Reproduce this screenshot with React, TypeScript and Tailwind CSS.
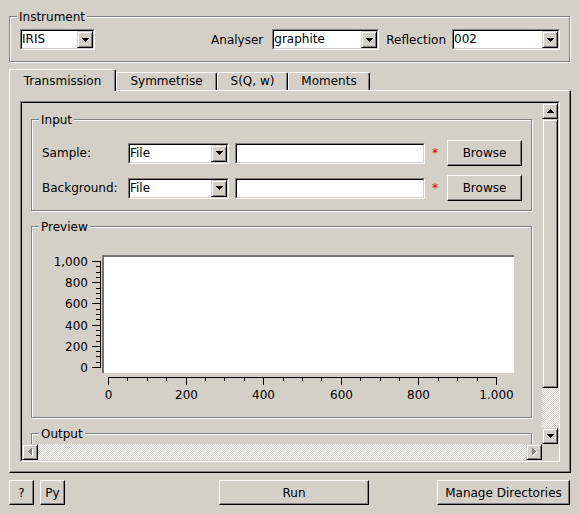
import React from "react";

const raised =
  "border border-t-white border-l-white border-r-black border-b-black shadow-[inset_-1px_-1px_0_#808080]";
const raisedSb =
  "border border-t-[#d4d0c8] border-l-[#d4d0c8] border-r-black border-b-black shadow-[inset_1px_1px_0_#fff,inset_-1px_-1px_0_#808080]";
const checker =
  "bg-[conic-gradient(#fff_25%,#d4d0c8_0_50%,#fff_0_75%,#d4d0c8_0)] bg-[length:2px_2px]";

type Dir = "up" | "down" | "left" | "right";

function Arrow({ dir, disabled = false }: { dir: Dir; disabled?: boolean }) {
  const rects = (fill: string, off: number) =>
    [0, 1, 2, 3].map((i) => {
      const k = fill + dir + i;
      if (dir === "down")
        return <rect key={k} x={i + off} y={i + off} width={7 - 2 * i} height={1} fill={fill} />;
      if (dir === "up")
        return <rect key={k} x={i + off} y={3 - i + off} width={7 - 2 * i} height={1} fill={fill} />;
      if (dir === "right")
        return <rect key={k} x={i + off} y={i + off} width={1} height={7 - 2 * i} fill={fill} />;
      return <rect key={k} x={3 - i + off} y={i + off} width={1} height={7 - 2 * i} fill={fill} />;
    });
  const horiz = dir === "up" || dir === "down";
  const w = (horiz ? 7 : 4) + (disabled ? 1 : 0);
  const h = (horiz ? 4 : 7) + (disabled ? 1 : 0);
  return (
    <svg width={w} height={h} shapeRendering="crispEdges" className="block">
      {disabled && rects("#ffffff", 1)}
      {rects(disabled ? "#808080" : "#000000", 0)}
    </svg>
  );
}

function Combo({ value, className = "" }: { value: string; className?: string }) {
  return (
    <div
      className={`h-[21px] shrink-0 border border-t-[#808080] border-l-[#808080] border-r-white border-b-white ${className}`}
    >
      <div className="flex h-full border border-t-black border-l-black border-r-[#d4d0c8] border-b-[#d4d0c8] bg-white">
        <span className="flex-1 leading-[17px] whitespace-nowrap overflow-hidden">{value}</span>
        <div className={`w-[16px] h-full flex items-center justify-center bg-[#d4d0c8] ${raisedSb}`}>
          <Arrow dir="down" />
        </div>
      </div>
    </div>
  );
}

function TextField({ className = "" }: { className?: string }) {
  return (
    <div
      className={`h-[21px] shrink-0 border border-t-[#808080] border-l-[#808080] border-r-white border-b-white ${className}`}
    >
      <div className="h-full border border-t-black border-l-black border-r-[#d4d0c8] border-b-[#d4d0c8] bg-white" />
    </div>
  );
}

function Btn({ children, className = "" }: { children: React.ReactNode; className?: string }) {
  return (
    <div className={`flex items-center justify-center bg-[#d4d0c8] shrink-0 whitespace-nowrap ${raised} ${className}`}>
      {children}
    </div>
  );
}

function GroupBox({
  label,
  labelClass = "left-[7px]",
  className = "",
  children,
}: {
  label: string;
  labelClass?: string;
  className?: string;
  children?: React.ReactNode;
}) {
  return (
    <div
      className={`relative border border-[#808080] shadow-[1px_1px_0_#fff,inset_1px_1px_0_#fff] ${className}`}
    >
      <span className={`absolute top-[-7px] ${labelClass} px-[2px] bg-[#d4d0c8] leading-[14px] whitespace-nowrap`}>
        {label}
      </span>
      {children}
    </div>
  );
}

function InputRow({ label }: { label: string }) {
  return (
    <div className="flex items-center h-[26px]">
      <span className="w-[86px] shrink-0 whitespace-nowrap">{label}</span>
      <Combo value="File" className="w-[101px]" />
      <TextField className="w-[190px] ml-[6px]" />
      <span className="ml-[7px] w-[6px] text-[#d40000] leading-[14px]">*</span>
      <Btn className="ml-[9px] w-[75px] h-[26px]">Browse</Btn>
    </div>
  );
}

function Plot() {
  const yt = (v: number) => Math.round(140 - v * 0.106);
  const xt = (v: number) => Math.round(76 + v * 0.388);
  const steps: number[] = [];
  for (let v = 0; v <= 1000; v += 50) steps.push(v);
  const yLabels: Record<number, string> = { 0: "0", 200: "200", 400: "400", 600: "600", 800: "800", 1000: "1,000" };
  const xLabels: Record<number, string> = { 0: "0", 200: "200", 400: "400", 600: "600", 800: "800", 1000: "1.000" };
  return (
    <svg width={499} height={190} shapeRendering="crispEdges" className="block">
      <rect x={70} y={28} width={412} height={118} fill="#ffffff" />
      <rect x={70} y={28} width={412} height={2} fill="#737373" />
      <rect x={70} y={28} width={2} height={118} fill="#737373" />
      <rect x={68} y={34} width={1} height={107} fill="#000" />
      {steps.map((v) => {
        const major = v % 200 === 0;
        return (
          <rect key={"yt" + v} x={major ? 60 : 64} y={yt(v)} width={major ? 8 : 4} height={1} fill="#000" />
        );
      })}
      {Object.keys(yLabels).map((k) => {
        const v = Number(k);
        return (
          <text
            key={"yl" + v}
            x={56}
            y={yt(v) + 4.6}
            textAnchor="end"
            fontFamily="DejaVu Sans, sans-serif"
            fontSize={12}
            fill="#000"
            shapeRendering="auto"
          >
            {yLabels[v]}
          </text>
        );
      })}
      <rect x={76} y={150} width={389} height={1} fill="#000" />
      {steps.map((v) => {
        const major = v % 200 === 0;
        return <rect key={"xt" + v} x={xt(v)} y={150} width={1} height={major ? 8 : 4} fill="#000" />;
      })}
      {Object.keys(xLabels).map((k) => {
        const v = Number(k);
        return (
          <text
            key={"xl" + v}
            x={xt(v) + 0.5}
            y={172}
            textAnchor="middle"
            fontFamily="DejaVu Sans, sans-serif"
            fontSize={12}
            fill="#000"
          >
            {xLabels[v]}
          </text>
        );
      })}
    </svg>
  );
}

function VScroll() {
  return (
    <div className="flex flex-col">
      <div className={`h-[16px] shrink-0 flex items-center justify-center bg-[#d4d0c8] ${raisedSb}`}>
        <Arrow dir="up" />
      </div>
      <div className={`h-[269px] shrink-0 bg-[#d4d0c8] ${raisedSb}`} />
      <div className={`flex-1 ${checker}`} />
      <div className={`h-[16px] shrink-0 flex items-center justify-center bg-[#d4d0c8] ${raisedSb}`}>
        <Arrow dir="down" />
      </div>
    </div>
  );
}

function HScroll() {
  return (
    <div className="flex">
      <div className={`w-[16px] shrink-0 flex items-center justify-center bg-[#d4d0c8] ${raisedSb}`}>
        <Arrow dir="left" disabled />
      </div>
      <div className={`flex-1 ${checker}`} />
      <div className={`w-[16px] shrink-0 flex items-center justify-center bg-[#d4d0c8] ${raisedSb}`}>
        <Arrow dir="right" disabled />
      </div>
    </div>
  );
}

function Tab({ children, className = "" }: { children: React.ReactNode; className?: string }) {
  return (
    <div
      className={`h-[18px] shrink-0 flex items-end justify-center pb-[2px] border-t border-l border-r border-t-white border-l-white border-r-black shadow-[inset_-1px_0_0_#808080] rounded-t-[2px] whitespace-nowrap ${className}`}
    >
      {children}
    </div>
  );
}

export default function App() {
  return (
    <div className="w-[580px] h-[514px] overflow-hidden bg-[#d4d0c8] text-black text-[12px] leading-[14px] font-['DejaVu_Sans',sans-serif] pt-[16px] px-[9px]">
      <GroupBox
        label="Instrument"
        labelClass="left-[7px]"
        className="w-[561px] pt-[12px] pb-[11px] pl-[10px] pr-[9px] flex items-center justify-between"
      >
        <Combo value="IRIS" className="w-[75px]" />
        <div className="flex items-center">
          <span className="whitespace-nowrap">Analyser</span>
          <Combo value="graphite" className="w-[107px] ml-[9px]" />
          <span className="ml-[7px] whitespace-nowrap">Reflection</span>
          <Combo value="002" className="w-[108px] ml-[6px]" />
        </div>
      </GroupBox>

      <div className="mt-[7px] flex items-end h-[21px]">
        <div className="relative z-10 h-[22px] mb-[-1px] w-[107px] shrink-0 bg-[#d4d0c8] flex items-end justify-center pb-[3px] border-t border-l border-r border-t-white border-l-white border-r-black shadow-[inset_-1px_0_0_#808080] rounded-t-[2px]">
          Transmission
        </div>
        <Tab className="w-[101px] ml-0">Symmetrise</Tab>
        <Tab className="w-[71px]">S(Q, w)</Tab>
        <Tab className="w-[82px]">Moments</Tab>
      </div>

      <div className="h-[383px] p-[10px] border border-t-white border-l-white border-r-black border-b-black shadow-[inset_-1px_-1px_0_#808080]">
        <div className="h-[361px] border border-t-[#808080] border-l-[#808080] border-r-white border-b-white">
          <div className="h-full border border-t-black border-l-black border-r-[#d4d0c8] border-b-[#d4d0c8] grid grid-cols-[520px_16px] grid-rows-[341px_16px]">
            <div className="overflow-hidden">
              <div className="pt-[16px] pl-[9px] pr-[10px]">
                <GroupBox label="Input" className="pt-[20px] pb-[9px] pl-[10px] pr-[9px] flex flex-col gap-[9px]">
                  <InputRow label="Sample:" />
                  <InputRow label="Background:" />
                </GroupBox>
                <GroupBox label="Preview" className="mt-[15px] h-[192px]">
                  <Plot />
                </GroupBox>
                <GroupBox label="Output" className="mt-[15px] h-[120px]" />
              </div>
            </div>
            <VScroll />
            <HScroll />
            <div />
          </div>
        </div>
      </div>

      <div className="mt-[7px] flex h-[25px]">
        <Btn className="w-[25px]">?</Btn>
        <Btn className="w-[25px] ml-[6px]">Py</Btn>
        <Btn className="w-[150px] ml-[154px]">Run</Btn>
        <Btn className="w-[133px] ml-[68px]">Manage Directories</Btn>
      </div>
    </div>
  );
}
